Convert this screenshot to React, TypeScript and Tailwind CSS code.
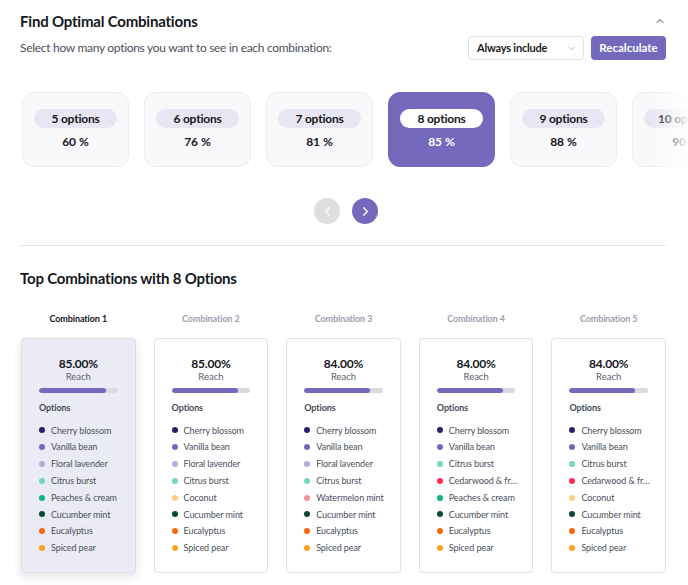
import React from "react";
import { ChevronUp, ChevronDown, ChevronLeft, ChevronRight } from "lucide-react";

const sizes = [
  { n: 5, pct: 60 },
  { n: 6, pct: 76 },
  { n: 7, pct: 81 },
  { n: 8, pct: 85 },
  { n: 9, pct: 88 },
  { n: 10, pct: 90 },
];

const dot: Record<string, string> = {
  "Cherry blossom": "bg-[#2f1c6a]",
  "Vanilla bean": "bg-[#7569bd]",
  "Floral lavender": "bg-[#b6ace0]",
  "Citrus burst": "bg-[#72d7bc]",
  "Peaches & cream": "bg-[#10b288]",
  "Cucumber mint": "bg-[#0b4a2f]",
  Eucalyptus: "bg-[#f36a12]",
  "Spiced pear": "bg-[#ffa21f]",
  Coconut: "bg-[#ffcb7e]",
  "Watermelon mint": "bg-[#f7929c]",
  "Cedarwood & fr…": "bg-[#ff2d55]",
};

const combos = [
  {
    reach: "85.00%",
    fill: 85,
    items: ["Cherry blossom", "Vanilla bean", "Floral lavender", "Citrus burst", "Peaches & cream", "Cucumber mint", "Eucalyptus", "Spiced pear"],
  },
  {
    reach: "85.00%",
    fill: 85,
    items: ["Cherry blossom", "Vanilla bean", "Floral lavender", "Citrus burst", "Coconut", "Cucumber mint", "Eucalyptus", "Spiced pear"],
  },
  {
    reach: "84.00%",
    fill: 84,
    items: ["Cherry blossom", "Vanilla bean", "Floral lavender", "Citrus burst", "Watermelon mint", "Cucumber mint", "Eucalyptus", "Spiced pear"],
  },
  {
    reach: "84.00%",
    fill: 84,
    items: ["Cherry blossom", "Vanilla bean", "Citrus burst", "Cedarwood & fr…", "Peaches & cream", "Cucumber mint", "Eucalyptus", "Spiced pear"],
  },
  {
    reach: "84.00%",
    fill: 84,
    items: ["Cherry blossom", "Vanilla bean", "Citrus burst", "Cedarwood & fr…", "Coconut", "Cucumber mint", "Eucalyptus", "Spiced pear"],
  },
];

export default function App() {
  return (
    <div className="w-[688px] h-[585px] overflow-hidden bg-white text-[#1f2430] font-['Lato',sans-serif]">
      <div className="pl-5 pr-[22px] pt-[10px]">
        {/* Header */}
        <div className="flex items-center justify-between h-[22px]">
          <h1 className="text-[15px] leading-[22px] tracking-[-0.2px] font-bold text-[#15171c]">
            Find Optimal Combinations
          </h1>
          <ChevronUp size={12} strokeWidth={2} className="text-[#3a3f4a]" />
        </div>
        <div className="flex items-center justify-between mt-[4px] h-[24px]">
          <p className="text-[12px] leading-[16px] tracking-[-0.3px] text-[#4a4f5c]">
            Select how many options you want to see in each combination:
          </p>
          <div className="flex items-center gap-[7px]">
            <div className="w-[116px] h-[24px] border border-[#dfe1e6] rounded-[4px] flex items-center justify-between pl-[8px] pr-[6px]">
              <span className="text-[11px] leading-[14px] tracking-[-0.2px] font-bold text-[#1a1c22]">Always include</span>
              <ChevronDown size={11} className="text-[#b5b8c0]" />
            </div>
            <button className="w-[75px] h-[24px] rounded-[4px] bg-[#7569bd] text-white text-[11.5px] leading-[14px] font-bold">
              Recalculate
            </button>
          </div>
        </div>
      </div>

      {/* Size carousel */}
      <div className="relative mt-[32px] pl-[22px] overflow-hidden">
        <div className="flex gap-[15px]">
          {sizes.map((s) => {
            const active = s.n === 8;
            return (
              <div
                key={s.n}
                className={
                  active
                    ? "shrink-0 w-[107px] h-[75px] rounded-[12px] bg-[#7569bd] border border-[#7569bd] flex flex-col items-center pt-[16px]"
                    : "shrink-0 w-[107px] h-[75px] rounded-[12px] bg-[#f9f9fc] border border-[#eaeaf3] flex flex-col items-center pt-[16px]"
                }
              >
                <div
                  className={
                    active
                      ? "w-[83px] h-[19px] rounded-full bg-white flex items-center justify-center text-[12px] tracking-[-0.2px] font-bold text-[#15171c]"
                      : "w-[83px] h-[19px] rounded-full bg-[#e9e6f3] flex items-center justify-center text-[12px] tracking-[-0.2px] font-bold text-[#15171c]"
                  }
                >
                  {s.n} options
                </div>
                <div
                  className={
                    active
                      ? "mt-[5px] text-[12px] leading-[18px] font-bold text-white"
                      : "mt-[5px] text-[12px] leading-[18px] font-bold text-[#15171c]"
                  }
                >
                  {s.pct} %
                </div>
              </div>
            );
          })}
        </div>
        <div className="absolute right-0 top-0 h-full w-[36px] bg-gradient-to-r from-white/0 to-white/95" />
      </div>

      {/* Nav */}
      <div className="flex justify-center gap-[12px] mt-[31px] pl-[4px]">
        <div className="w-[26px] h-[26px] rounded-full bg-[#dedede] flex items-center justify-center">
          <ChevronLeft size={15} strokeWidth={2} className="text-white" />
        </div>
        <div className="w-[26px] h-[26px] rounded-full bg-[#7569bd] flex items-center justify-center">
          <ChevronRight size={15} strokeWidth={2} className="text-white" />
        </div>
      </div>

      <div className="pl-5 pr-[22px]">
        <div className="mt-[21px] border-t border-[#e4e4e8]" />

        <h2 className="mt-[21px] text-[15px] tracking-[-0.2px] font-bold text-[#15171c] leading-[22px]">
          Top Combinations with 8 Options
        </h2>

        <div className="grid grid-cols-5 gap-[18px] mt-[23px] pl-px">
          {combos.map((c, i) => (
            <div key={i} className="flex flex-col">
              <div
                className={
                  i === 0
                    ? "leading-[14px] mb-[12px] text-center text-[9px] tracking-[-0.1px] font-bold text-[#15171c]"
                    : "leading-[14px] mb-[12px] text-center text-[9px] tracking-[-0.1px] font-bold text-[#9ba0ad]"
                }
              >
                Combination {i + 1}
              </div>
              <div
                className={
                  i === 0
                    ? "h-[235px] rounded-[4px] bg-[#ebebf5] border border-[#dcdce8] shadow-[0_4px_10px_rgba(30,30,60,0.12)] px-[17px] pt-[17px]"
                    : "h-[235px] rounded-[4px] bg-white border border-[#dfe0e6] px-[17px] pt-[17px]"
                }
              >
                <div className="text-center text-[12px] tracking-[-0.2px] font-bold text-[#15171c] leading-[15px]">{c.reach}</div>
                <div className="text-center text-[9.5px] text-[#5b6070] leading-[11px]">Reach</div>
                <div className="mt-[6px] h-[5px] rounded-full bg-[#d7dae1] overflow-hidden">
                  <div className="h-full rounded-full bg-[#7569bd]" style={{ width: `${c.fill}%` }} />
                </div>
                <div className="mt-[9px] text-[9px] leading-[12px] tracking-[-0.1px] font-bold text-[#454a58]">Options</div>
                <ul className="mt-[8px] flex flex-col">
                  {c.items.map((it) => (
                    <li key={it} className="flex items-center h-[16.8px] gap-[6px]">
                      <span className={`shrink-0 w-[6px] h-[6px] rounded-full ${dot[it]}`} />
                      <span className="text-[9px] tracking-[-0.1px] text-[#4a4f5c] whitespace-nowrap">{it}</span>
                    </li>
                  ))}
                </ul>
              </div>
            </div>
          ))}
        </div>
      </div>
    </div>
  );
}
